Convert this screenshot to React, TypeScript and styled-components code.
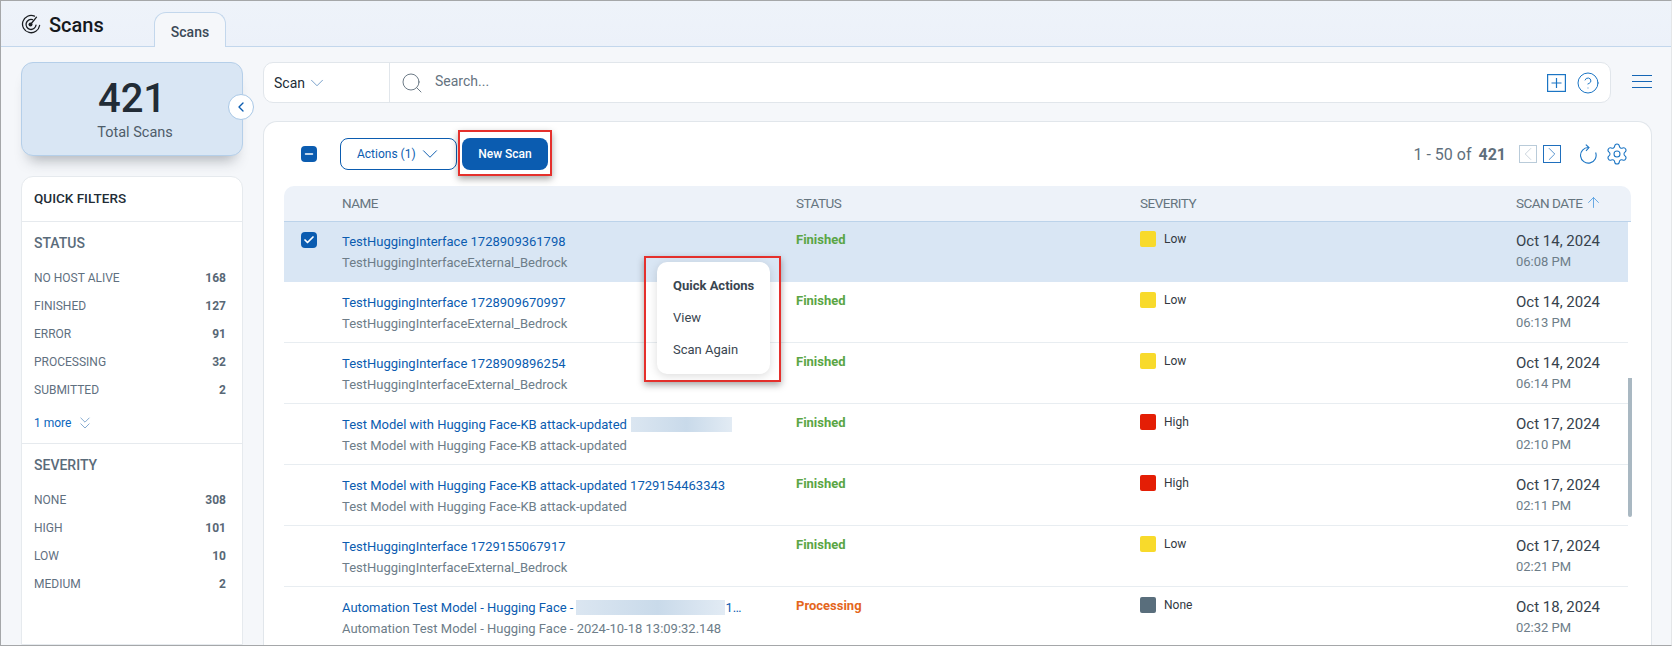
import React from 'react';
import styled, { createGlobalStyle } from 'styled-components';
import { ArrowUp, Check, ChevronDown, ChevronLeft, ChevronRight, ChevronsDown, CircleHelp, Minus, Search, Settings } from 'lucide-react';

const GlobalStyle = createGlobalStyle`
  html, body {
    margin: 0;
    padding: 0;
    background: #f5f7fa;
    font-family: Roboto, "Liberation Sans", sans-serif;
  }
`;

const Frame = styled.div`
  box-sizing: border-box;
  width: 1672px;
  height: 646px;
  border: 1px solid #a5a7a9;
  border-right-color: #e4e6e8;
  background: #f5f7fa;
  overflow: hidden;
  display: flex;
  flex-direction: column;
`;

const TabBar = styled.div`
  box-sizing: border-box;
  flex: none;
  height: 46px;
  display: flex;
  align-items: flex-end;
  padding-left: 21px;
  background: linear-gradient(#eef3fa, #ecf1f9);
  border-bottom: 1px solid #c3d7ec;
`;

const PageTitle = styled.div`
  display: flex;
  align-items: center;
  gap: 8px;
  align-self: flex-start;
  margin-top: 14px;
  width: 132px;
  font-size: 20px;
  line-height: 20px;
  font-weight: 500;
  color: #15191d;
  svg {
    margin: -3px 0 0 -1px;
  }
`;

const Tab = styled.div`
  box-sizing: border-box;
  width: 72px;
  height: 35px;
  margin-bottom: -1px;
  display: flex;
  align-items: center;
  justify-content: center;
  padding-top: 3px;
  background: #f5f7fa;
  border: 1px solid #c3d7ec;
  border-bottom: none;
  border-radius: 12px 12px 0 0;
  font-size: 14px;
  font-weight: 500;
  color: #3c4a57;
`;

const Body = styled.div`
  flex: 1;
  min-height: 0;
  display: flex;
`;

const Sidebar = styled.aside`
  box-sizing: border-box;
  flex: none;
  width: 262px;
  padding: 15px 20px 0;
  display: flex;
  flex-direction: column;
  gap: 20px;
`;

const SummaryCard = styled.div`
  position: relative;
  box-sizing: border-box;
  flex: none;
  height: 94px;
  padding-top: 14px;
  display: flex;
  flex-direction: column;
  align-items: center;
  background: #d9e6f4;
  border: 1px solid #b5cfe9;
  border-radius: 12px;
  box-shadow: 0 12px 14px -8px rgba(40, 50, 60, 0.35);
`;

const SummaryValue = styled.div`
  font-size: 40px;
  line-height: 44px;
  font-weight: 500;
  color: #222c36;
`;

const SummaryLabel = styled.div`
  margin: 3px 0 0 6px;
  font-size: 14.5px;
  line-height: 18px;
  color: #4e5c69;
`;

const CollapseButton = styled.div`
  position: absolute;
  right: -12px;
  top: 31px;
  box-sizing: border-box;
  width: 26px;
  height: 26px;
  display: flex;
  align-items: center;
  justify-content: center;
  background: #fff;
  border: 1px solid #a9c8e6;
  border-radius: 50%;
  color: #0b5cb0;
`;

const FilterCard = styled.div`
  flex: 1;
  background: #fff;
  border: 1px solid #e6eaee;
  border-radius: 12px 12px 0 0;
`;

const FilterCardTitle = styled.div`
  box-sizing: border-box;
  height: 45px;
  padding: 13px 12px 0;
  font-size: 13.5px;
  line-height: 16px;
  font-weight: 500;
  color: #222c36;
  border-bottom: 1px solid #e6eaee;
`;

const FilterGroup = styled.div<{ $last?: boolean }>`
  box-sizing: border-box;
  height: ${(p) => (p.$last ? 'auto' : '222px')};
  padding: 12px 16px 0 12px;
  border-bottom: ${(p) => (p.$last ? 'none' : '1px solid #e6eaee')};
`;

const FilterHeading = styled.div`
  height: 18px;
  line-height: 18px;
  margin-bottom: 12px;
  font-size: 14px;
  font-weight: 500;
  color: #5a6b7a;
`;

const FilterRow = styled.div`
  display: flex;
  justify-content: space-between;
  height: 28px;
  line-height: 28px;
  font-size: 12px;
  color: #5f707f;
`;

const FilterCount = styled.span`
  font-weight: 700;
  color: #586876;
`;

const MoreLink = styled.div`
  display: flex;
  align-items: center;
  gap: 4px;
  margin-top: 10px;
  height: 18px;
  font-size: 12px;
  color: #0b66bd;
  svg {
    color: #4a80b8;
  }
`;

const Main = styled.main`
  box-sizing: border-box;
  flex: 1;
  min-width: 0;
  padding: 15px 19px 0 0;
  display: flex;
  flex-direction: column;
`;

const TopRow = styled.div`
  position: relative;
  flex: none;
  height: 41px;
  margin-bottom: 18px;
  display: flex;
  align-items: center;
`;

const SearchBar = styled.div`
  box-sizing: border-box;
  position: absolute;
  top: 0;
  left: 0;
  width: 1348px;
  height: 41px;
  display: flex;
  align-items: stretch;
  background: #fff;
  border: 1px solid #e1e6eb;
  border-radius: 10px;
`;

const ScopeSelect = styled.div`
  box-sizing: border-box;
  width: 126px;
  padding-left: 10px;
  display: flex;
  align-items: center;
  gap: 1px;
  border-right: 1px solid #e1e6eb;
  font-size: 14px;
  color: #222c36;
  svg {
    color: #4a80b8;
  }
`;

const SearchField = styled.div`
  flex: 1;
  padding: 0 10px 0 10px;
  display: flex;
  align-items: center;
  gap: 11px;
  svg {
    flex: none;
  }
`;

const SearchHint = styled.span`
  flex: 1;
  margin-top: -4px;
  font-size: 14px;
  color: #65737f;
`;

const SearchIcons = styled.div`
  display: flex;
  align-items: center;
  gap: 10px;
  color: #1b75c4;
`;

const MenuButton = styled.div`
  position: absolute;
  right: 0;
  top: 13px;
  line-height: 0;
`;

const ResultsCard = styled.section`
  box-sizing: border-box;
  flex: 1;
  min-height: 0;
  padding: 16px 20px 0;
  background: #fff;
  border: 1px solid #e1e6eb;
  border-bottom: none;
  border-radius: 14px 14px 0 0;
  overflow: hidden;
`;

const Toolbar = styled.div`
  height: 32px;
  margin-bottom: 16px;
  padding: 0 4px 0 17px;
  display: flex;
  align-items: center;
`;

const Checkbox = styled.div`
  flex: none;
  width: 16px;
  height: 16px;
  display: flex;
  align-items: center;
  justify-content: center;
  background: #0b5cb0;
  border-radius: 4px;
  color: #fff;
`;

const ActionsButton = styled.div`
  box-sizing: border-box;
  width: 117px;
  height: 32px;
  margin-left: 23px;
  padding-left: 16px;
  display: flex;
  align-items: center;
  gap: 1px;
  background: #fff;
  border: 1px solid #0b5cb0;
  border-radius: 8px;
  font-size: 12px;
  color: #0b5cb0;
`;

const NewScanWrap = styled.div`
  position: relative;
  margin-left: 5px;
`;

const NewScanButton = styled.div`
  width: 86px;
  height: 32px;
  display: flex;
  align-items: center;
  justify-content: center;
  background: #0b5cb0;
  border-radius: 8px;
  font-size: 12px;
  font-weight: 500;
  color: #fff;
`;

const Highlight = styled.div`
  position: absolute;
  box-sizing: border-box;
  border: 2px solid #e5302c;
  box-shadow: 0 3px 7px rgba(0, 0, 0, 0.35);
`;

const ButtonHighlight = styled(Highlight)`
  inset: -8px -4px -6px -4px;
`;

const MenuHighlight = styled(Highlight)`
  left: 360px;
  top: 34px;
  width: 137px;
  height: 126px;
  padding: 4px 9px 6px 11px;
  display: flex;
`;

const Pager = styled.div`
  margin-left: auto;
  margin-right: -2px;
  display: flex;
  align-items: center;
  font-size: 16px;
  color: #5f6f7c;
`;

const PagerTotal = styled.strong`
  margin-left: 7px;
  margin-right: 13px;
  font-weight: 700;
`;

const PageStep = styled.div<{ $disabled?: boolean }>`
  box-sizing: border-box;
  flex: none;
  width: 18px;
  height: 18px;
  margin-right: 6px;
  display: flex;
  align-items: center;
  justify-content: center;
  border: 1px solid ${(p) => (p.$disabled ? '#b9cbd9' : '#1f6fbd')};
  color: ${(p) => (p.$disabled ? '#b9c6d0' : '#1f6fbd')};
  svg {
    flex: none;
  }
`;

const PagerIcons = styled.div`
  margin-left: 12px;
  display: flex;
  align-items: center;
  gap: 8px;
  color: #1b75c4;
`;

const RowGrid = styled.div`
  display: grid;
  grid-template-columns: 58px 454px 344px 376px 1fr;
`;

const TableHead = styled(RowGrid)`
  height: 36px;
  padding-bottom: 2px;
  align-items: center;
  background: #edf2f9;
  border-bottom: 1px solid #bcd3ea;
  border-radius: 10px 10px 0 0;
  box-sizing: border-box;
  font-size: 13.5px;
  letter-spacing: -0.5px;
  color: #66757f;
`;

const HeadDate = styled.div`
  display: flex;
  align-items: center;
  gap: 2px;
  svg {
    color: #4f9ce0;
  }
`;

const Rows = styled.div`
  position: relative;
  width: 1344px;
`;

const Row = styled(RowGrid)<{ $selected?: boolean; $first?: boolean }>`
  box-sizing: border-box;
  height: ${(p) => (p.$first ? '60px' : '61px')};
  padding-top: ${(p) => (p.$first ? '9px' : '10px')};
  align-items: start;
  background: ${(p) => (p.$selected ? '#d9e6f4' : '#fff')};
  border-bottom: ${(p) => (p.$selected ? 'none' : '1px solid #e8edf1')};
`;

const CheckCell = styled.div`
  padding: 1px 0 0 17px;
`;

const NameCell = styled.div`
  font-size: 13px;
  line-height: 21px;
  white-space: nowrap;
`;

const ScanName = styled.div`
  color: #0b5cb0;
`;

const ScanSub = styled.div`
  color: #6d7d89;
`;

const Redacted = styled.span<{ $width: number; $gap: number }>`
  display: inline-block;
  vertical-align: middle;
  width: ${(p) => p.$width}px;
  height: 15px;
  margin: -2px 0 0 ${(p) => p.$gap}px;
  background: linear-gradient(90deg, #dbe6f1, #c9daea 55%, #e2ebf4);
`;

const StatusCell = styled.div<{ $processing?: boolean }>`
  font-size: 13px;
  line-height: 18px;
  font-weight: 700;
  color: ${(p) => (p.$processing ? '#e4661c' : '#5aa545')};
`;

const SeverityCell = styled.div`
  display: flex;
  align-items: center;
  gap: 8px;
  font-size: 12px;
  line-height: 16px;
  color: #33393f;
`;

const Swatch = styled.span<{ $color: string }>`
  width: 16px;
  height: 16px;
  border-radius: 2px;
  background: ${(p) => p.$color};
`;

const DateCell = styled.div`
  line-height: 20px;
`;

const DateText = styled.div`
  font-size: 15px;
  color: #36424d;
`;

const TimeText = styled.div`
  margin-top: 1px;
  font-size: 13px;
  color: #6d7d89;
`;

const ScrollThumb = styled.div`
  position: absolute;
  left: 1344px;
  top: 156px;
  width: 4px;
  height: 139px;
  background: #a9b8c2;
  border-radius: 0 0 2px 2px;
`;

const QuickMenu = styled.div`
  flex: 1;
  padding-top: 15px;
  background: #fff;
  border-radius: 10px;
  box-shadow: 0 2px 10px rgba(0, 0, 0, 0.14);
`;

const QuickItem = styled.div<{ $title?: boolean }>`
  height: 32px;
  line-height: 18px;
  padding-left: 16px;
  font-size: 13px;
  font-weight: ${(p) => (p.$title ? 700 : 400)};
  color: #3a4651;
`;

const RadarIcon = () => (
  <svg width="20" height="20" viewBox="0 0 20 20" fill="none" stroke="#1a1d21" strokeWidth="1.3" strokeLinecap="round">
    <path d="M13.5 2.2A8.6 8.6 0 1 0 18.6 11.5" />
    <path d="M11.5 5.7A5 5 0 1 0 15 11.2" />
    <path d="M9.5 10.5 15.5 3.2" />
    <circle cx="9.5" cy="10.5" r="2" fill="#1a1d21" stroke="none" />
  </svg>
);

const PlusBoxIcon = () => (
  <svg width="19" height="18" viewBox="0 0 19 18" fill="none" stroke="currentColor" strokeWidth="1.2">
    <rect x="0.6" y="0.6" width="17.8" height="16.8" />
    <path d="M9.5 4v10M4.5 9h10" />
  </svg>
);

const RefreshIcon = () => (
  <svg width="18" height="20" viewBox="0 0 18 20" fill="none" stroke="currentColor" strokeWidth="1.1">
    <path d="M9.5 3.5A7.8 7.8 0 1 0 16.6 8.5" />
    <path d="M6.8 0.6 10 3.6 7 6.8" />
  </svg>
);

const MenuIcon = () => (
  <svg width="20" height="14" viewBox="0 0 20 14" fill="none" stroke="#1566b5" strokeWidth="1">
    <path d="M0 .5h20M0 6.5h20M0 12.5h20" />
  </svg>
);

type Scan = {
  name: string;
  redact?: number;
  redactGap?: number;
  tail?: string;
  sub: string;
  status: string;
  severity: 'Low' | 'High' | 'None';
  date: string;
  time: string;
};

const severityColors = { Low: '#f8da2b', High: '#e41e05', None: '#596e7c' };

const scans: Scan[] = [
  { name: 'TestHuggingInterface 1728909361798', sub: 'TestHuggingInterfaceExternal_Bedrock', status: 'Finished', severity: 'Low', date: 'Oct 14, 2024', time: '06:08 PM' },
  { name: 'TestHuggingInterface 1728909670997', sub: 'TestHuggingInterfaceExternal_Bedrock', status: 'Finished', severity: 'Low', date: 'Oct 14, 2024', time: '06:13 PM' },
  { name: 'TestHuggingInterface 1728909896254', sub: 'TestHuggingInterfaceExternal_Bedrock', status: 'Finished', severity: 'Low', date: 'Oct 14, 2024', time: '06:14 PM' },
  { name: 'Test Model with Hugging Face-KB attack-updated ', redact: 101, redactGap: 1, sub: 'Test Model with Hugging Face-KB attack-updated', status: 'Finished', severity: 'High', date: 'Oct 17, 2024', time: '02:10 PM' },
  { name: 'Test Model with Hugging Face-KB attack-updated 1729154463343', sub: 'Test Model with Hugging Face-KB attack-updated', status: 'Finished', severity: 'High', date: 'Oct 17, 2024', time: '02:11 PM' },
  { name: 'TestHuggingInterface 1729155067917', sub: 'TestHuggingInterfaceExternal_Bedrock', status: 'Finished', severity: 'Low', date: 'Oct 17, 2024', time: '02:21 PM' },
  { name: 'Automation Test Model - Hugging Face -', redact: 149, redactGap: 3, tail: '1…', sub: 'Automation Test Model - Hugging Face - 2024-10-18 13:09:32.148', status: 'Processing', severity: 'None', date: 'Oct 18, 2024', time: '02:32 PM' },
];

const statusFilters = [
  ['NO HOST ALIVE', 168],
  ['FINISHED', 127],
  ['ERROR', 91],
  ['PROCESSING', 32],
  ['SUBMITTED', 2],
];

const severityFilters = [
  ['NONE', 308],
  ['HIGH', 101],
  ['LOW', 10],
  ['MEDIUM', 2],
];

export default function App() {
  return (
    <Frame>
      <GlobalStyle />
      <TabBar>
        <PageTitle>
          <RadarIcon />
          Scans
        </PageTitle>
        <Tab>Scans</Tab>
      </TabBar>
      <Body>
        <Sidebar>
          <SummaryCard>
            <SummaryValue>421</SummaryValue>
            <SummaryLabel>Total Scans</SummaryLabel>
            <CollapseButton>
              <ChevronLeft size={16} strokeWidth={2} />
            </CollapseButton>
          </SummaryCard>
          <FilterCard>
            <FilterCardTitle>QUICK FILTERS</FilterCardTitle>
            <FilterGroup>
              <FilterHeading>STATUS</FilterHeading>
              {statusFilters.map(([label, count]) => (
                <FilterRow key={label}>
                  <span>{label}</span>
                  <FilterCount>{count}</FilterCount>
                </FilterRow>
              ))}
              <MoreLink>
                1 more
                <ChevronsDown size={20} strokeWidth={0.8} />
              </MoreLink>
            </FilterGroup>
            <FilterGroup $last>
              <FilterHeading>SEVERITY</FilterHeading>
              {severityFilters.map(([label, count]) => (
                <FilterRow key={label}>
                  <span>{label}</span>
                  <FilterCount>{count}</FilterCount>
                </FilterRow>
              ))}
            </FilterGroup>
          </FilterCard>
        </Sidebar>
        <Main>
          <TopRow>
            <SearchBar>
              <ScopeSelect>
                Scan
                <ChevronDown size={22} strokeWidth={0.8} />
              </ScopeSelect>
              <SearchField>
                <Search size={24} strokeWidth={0.9} color="#5b6b78" />
                <SearchHint>Search...</SearchHint>
                <SearchIcons>
                  <PlusBoxIcon />
                  <CircleHelp size={24} strokeWidth={1} />
                </SearchIcons>
              </SearchField>
            </SearchBar>
            <MenuButton>
              <MenuIcon />
            </MenuButton>
          </TopRow>
          <ResultsCard>
            <Toolbar>
              <Checkbox>
                <Minus size={12} strokeWidth={3} />
              </Checkbox>
              <ActionsButton>
                Actions (1)
                <ChevronDown size={26} strokeWidth={0.9} />
              </ActionsButton>
              <NewScanWrap>
                <NewScanButton>New Scan</NewScanButton>
                <ButtonHighlight />
              </NewScanWrap>
              <Pager>
                1 - 50 of
                <PagerTotal>421</PagerTotal>
                <PageStep $disabled>
                  <ChevronLeft size={22} strokeWidth={0.8} />
                </PageStep>
                <PageStep>
                  <ChevronRight size={22} strokeWidth={0.8} />
                </PageStep>
                <PagerIcons>
                  <RefreshIcon />
                  <Settings size={24} strokeWidth={1.05} />
                </PagerIcons>
              </Pager>
            </Toolbar>
            <TableHead>
              <span />
              <span>NAME</span>
              <span>STATUS</span>
              <span>SEVERITY</span>
              <HeadDate>
                SCAN DATE
                <ArrowUp size={17} strokeWidth={1.2} />
              </HeadDate>
            </TableHead>
            <Rows>
              {scans.map((scan, i) => (
                <Row key={scan.time} $first={i === 0} $selected={i === 0}>
                  <CheckCell>
                    {i === 0 && (
                      <Checkbox>
                        <Check size={12} strokeWidth={3.5} />
                      </Checkbox>
                    )}
                  </CheckCell>
                  <NameCell>
                    <ScanName>
                      {scan.name}
                      {scan.redact && <Redacted $width={scan.redact} $gap={scan.redactGap ?? 0} />}
                      {scan.tail}
                    </ScanName>
                    <ScanSub>{scan.sub}</ScanSub>
                  </NameCell>
                  <StatusCell $processing={scan.status === 'Processing'}>{scan.status}</StatusCell>
                  <SeverityCell>
                    <Swatch $color={severityColors[scan.severity]} />
                    {scan.severity}
                  </SeverityCell>
                  <DateCell>
                    <DateText>{scan.date}</DateText>
                    <TimeText>{scan.time}</TimeText>
                  </DateCell>
                </Row>
              ))}
              <MenuHighlight>
                <QuickMenu>
                  <QuickItem $title>Quick Actions</QuickItem>
                  <QuickItem>View</QuickItem>
                  <QuickItem>Scan Again</QuickItem>
                </QuickMenu>
              </MenuHighlight>
              <ScrollThumb />
            </Rows>
          </ResultsCard>
        </Main>
      </Body>
    </Frame>
  );
}
